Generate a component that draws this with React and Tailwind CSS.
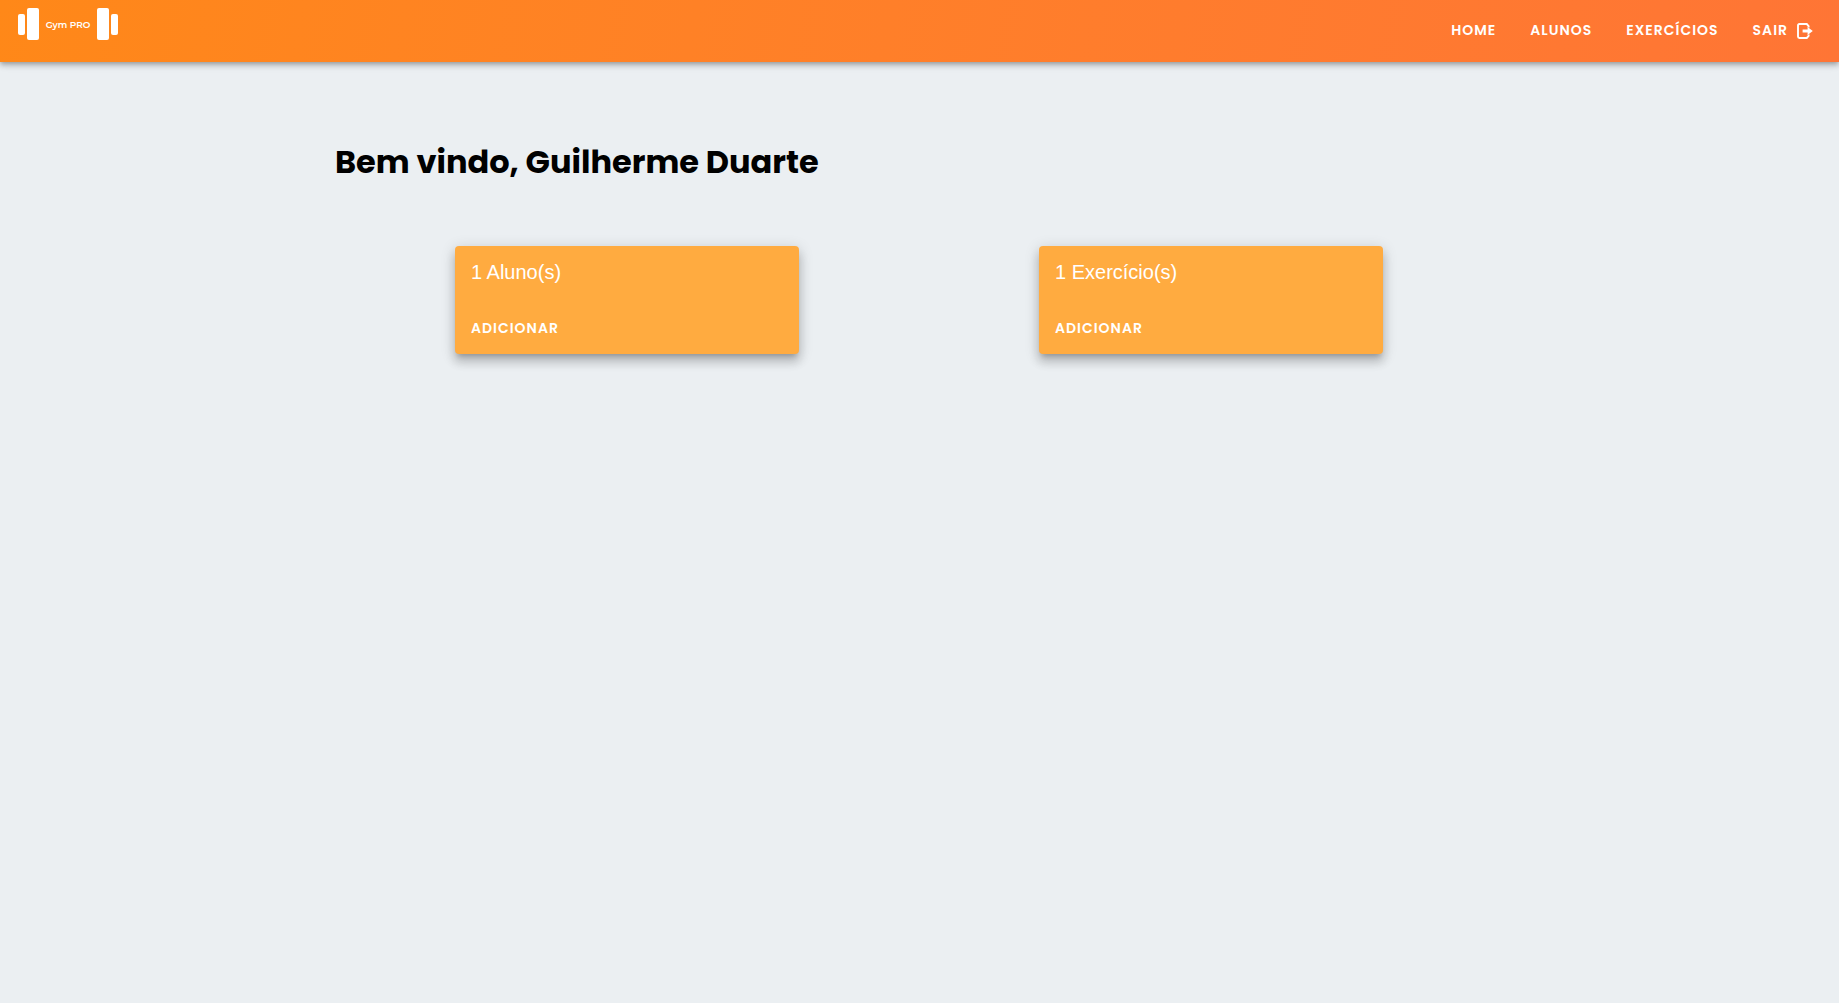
const links = ["Home", "Alunos", "Exercícios"];

const cards = [
  { title: "1 Aluno(s)" },
  { title: "1 Exercício(s)" },
];

function Logo() {
  return (
    <a href="#" aria-label="Gym PRO" className="mt-2 flex h-8 items-center self-start text-white">
      <span className="h-[21px] w-[7px] rounded-xs bg-white" />
      <span className="ml-0.5 h-8 w-3 rounded-xs bg-white" />
      <span className="w-[58px] pt-px text-center font-['Montserrat','Inter',sans-serif] text-[9px] leading-none font-semibold">
        Gym PRO
      </span>
      <span className="h-8 w-3 rounded-xs bg-white" />
      <span className="ml-0.5 h-[21px] w-[7px] rounded-xs bg-white" />
    </a>
  );
}

function LogoutIcon() {
  return (
    <svg viewBox="0 0 16 16" className="mt-0.5 h-4 w-4" fill="none" aria-hidden="true">
      <path
        d="M11.6 4.4V3L9.8 1H2.4Q1 1 1 2.4V13.6Q1 15 2.4 15H9.8L11.6 13V11.6"
        stroke="currentColor"
        strokeWidth="1.9"
      />
      <path d="M5.6 6.6H10.6V4L15.8 8L10.6 12V9.4H5.6Z" fill="currentColor" />
    </svg>
  );
}

const buttonText = "text-sm font-semibold uppercase tracking-[1px] text-white";

export default function App() {
  return (
    <div className="min-h-screen bg-[#ebeff2] font-['Poppins','Inter',sans-serif]">
      <header className="relative flex h-[62px] items-center justify-between bg-linear-100 from-[#ff8818] to-[#ff7535] pr-[26px] pl-[18px] shadow-[0_2px_4px_-1px_rgba(0,0,0,0.2),0_4px_5px_0_rgba(0,0,0,0.14),0_1px_10px_0_rgba(0,0,0,0.12)]">
        <Logo />
        <nav className="flex items-center gap-[34px] pb-0.5">
          {links.map((label) => (
            <a key={label} href="#" className={buttonText}>
              {label}
            </a>
          ))}
          <button type="button" className={`flex items-center gap-[9px] ${buttonText}`}>
            Sair
            <LogoutIcon />
          </button>
        </nav>
      </header>

      <main className="mx-auto max-w-[1169px] pt-[76px] pr-px">
        <h1 className="text-[32px] leading-12 font-bold text-black">Bem vindo, Guilherme Duarte</h1>
        <div className="mt-15 grid grid-cols-2 justify-items-center">
          {cards.map((card) => (
            <section
              key={card.title}
              className="w-full max-w-[344px] rounded bg-[#ffab40] text-white shadow-[0_5px_5px_-3px_rgba(0,0,0,0.2),0_8px_10px_1px_rgba(0,0,0,0.14),0_3px_14px_2px_rgba(0,0,0,0.12)]"
            >
              <h2 className="px-4 pt-[10px] font-['Liberation_Sans',sans-serif] text-xl leading-8">
                {card.title}
              </h2>
              <div className="px-2 pt-[22px] pb-2">
                <button type="button" className={`h-9 px-2 ${buttonText}`}>
                  Adicionar
                </button>
              </div>
            </section>
          ))}
        </div>
      </main>
    </div>
  );
}
